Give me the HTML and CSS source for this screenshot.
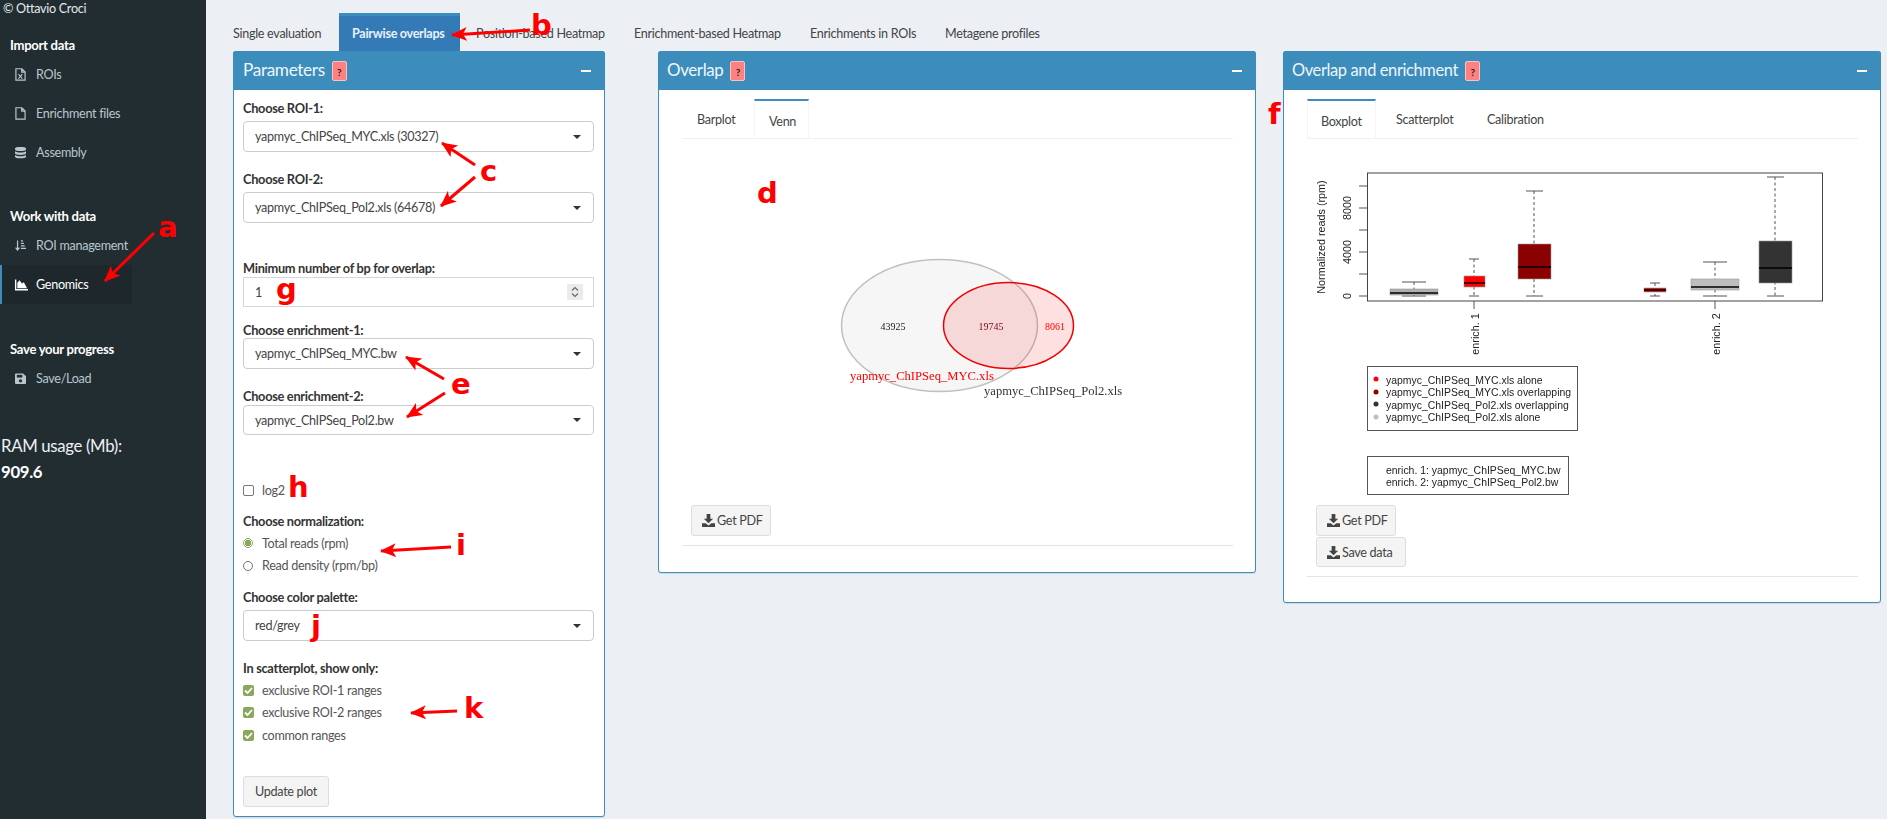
FILE: index.html
```html
<!DOCTYPE html>
<html lang="en">
<head>
<meta charset="utf-8">
<title>Pairwise overlaps</title>
<link rel="stylesheet" href="styles.css">
</head>
<body>
<aside class="sidebar">
  <div class="copyright">© Ottavio Croci</div>
  <div class="side-head first">Import data</div>
  <a class="side-item"><svg class="ico" viewBox="0 0 12 14"><path d="M1 .7h6.5L11 4.2v9H1zM7.3.9v3.5h3.5" fill="none" stroke="currentColor" stroke-width="1.3"/><path d="M3.8 6.5l4.2 5M8 6.5l-4.2 5" stroke="currentColor" stroke-width="1.2"/></svg><span>ROIs</span></a>
  <a class="side-item"><svg class="ico" viewBox="0 0 12 14"><path d="M1 .7h6.5L11 4.2v9H1zM7.3.9v3.5h3.5" fill="none" stroke="currentColor" stroke-width="1.3"/></svg><span>Enrichment files</span></a>
  <a class="side-item"><svg class="ico" viewBox="0 0 12 14"><path d="M0 2.5C0 .4 12 .4 12 2.5v1.2C12 6 0 6 0 3.700zM0 5.500c2 1.900 10 1.900 12 0v2.700c0 2-12 2-12 0zM0 9.800c2 1.900 10 1.900 12 0v1.700c0 2.200-12 2.200-12 0z" fill="currentColor"/></svg><span>Assembly</span></a>
  <div class="side-head">Work with data</div>
  <a class="side-item"><svg class="ico" viewBox="0 0 13 14"><path d="M3 1v11M.7 9.500L3 12.300l2.300-2.800" fill="none" stroke="currentColor" stroke-width="1.400"/><path d="M7 1.500h2.500M7 4.500h3.500M7 7.500h4.500M7 10.500h6" stroke="currentColor" stroke-width="1.500"/></svg><span>ROI management</span></a>
  <a class="side-item active"><svg class="ico" viewBox="0 0 14 14"><path d="M.7 1.500v11.200H14" fill="none" stroke="currentColor" stroke-width="1.500"/><path d="M2.500 11V5l2.500-2.500L7.500 6l2-1.500L13 11z" fill="currentColor"/></svg><span>Genomics</span></a>
  <div class="side-head save">Save your progress</div>
  <a class="side-item"><svg class="ico" viewBox="0 0 12 14"><path d="M1.300 1.500h7.500L12 4.500v7.500c0 .7-.5 1-1 1H1c-.6 0-1-.4-1-1V2.700c0-.7.500-1.200 1.300-1.200z" fill="currentColor"/><rect x="2" y="3" width="6" height="3" fill="#222d32"/><circle cx="6" cy="9.500" r="1.800" fill="#222d32"/></svg><span>Save/Load</span></a>
  <div class="ram">RAM usage (Mb):</div>
  <div class="ram strong">909.6</div>
</aside>

<main class="main">
  <nav class="top-tabs">
    <a class="top-tab t1">Single evaluation</a>
    <a class="top-tab t2 active">Pairwise overlaps</a>
    <a class="top-tab t3">Position-based Heatmap</a>
    <a class="top-tab t4">Enrichment-based Heatmap</a>
    <a class="top-tab t5">Enrichments in ROIs</a>
    <a class="top-tab t6">Metagene profiles</a>
  </nav>

  <div class="panels">
    <section class="panel params">
      <header class="panel-head"><h2>Parameters</h2><span class="help">?</span><i class="minus"></i></header>
      <div class="form">
        <label class="lab l1">Choose ROI-1:</label>
        <div class="select"><span>yapmyc_ChIPSeq_MYC.xls (30327)</span><b class="caret"></b></div>
        <label class="lab l2">Choose ROI-2:</label>
        <div class="select"><span>yapmyc_ChIPSeq_Pol2.xls (64678)</span><b class="caret"></b></div>
        <label class="lab l3">Minimum number of bp for overlap:</label>
        <div class="number"><span>1</span>
          <svg class="spin" viewBox="0 0 16 16"><rect width="16" height="16" fill="#ebebeb"/><path d="M5 6.500l3-3 3 3M5 9.500l3 3 3-3" fill="none" stroke="#666" stroke-width="1.100"/></svg>
        </div>
        <label class="lab l4">Choose enrichment-1:</label>
        <div class="select"><span>yapmyc_ChIPSeq_MYC.bw</span><b class="caret"></b></div>
        <label class="lab l5">Choose enrichment-2:</label>
        <div class="select short"><span>yapmyc_ChIPSeq_Pol2.bw</span><b class="caret"></b></div>
        <div class="opt log"><i class="box"></i><span>log2</span></div>
        <label class="lab l6">Choose normalization:</label>
        <div class="opt"><i class="radio on"></i><span>Total reads (rpm)</span></div>
        <div class="opt"><i class="radio"></i><span>Read density (rpm/bp)</span></div>
        <label class="lab l7">Choose color palette:</label>
        <div class="select"><span>red/grey</span><b class="caret"></b></div>
        <label class="lab l8">In scatterplot, show only:</label>
        <div class="opt"><i class="box on"><svg viewBox="0 0 11 11"><path d="M2 5.500l2.500 2.500L9 3" fill="none" stroke="#fff" stroke-width="1.800"/></svg></i><span>exclusive ROI-1 ranges</span></div>
        <div class="opt"><i class="box on"><svg viewBox="0 0 11 11"><path d="M2 5.500l2.500 2.500L9 3" fill="none" stroke="#fff" stroke-width="1.800"/></svg></i><span>exclusive ROI-2 ranges</span></div>
        <div class="opt"><i class="box on"><svg viewBox="0 0 11 11"><path d="M2 5.500l2.500 2.500L9 3" fill="none" stroke="#fff" stroke-width="1.800"/></svg></i><span>common ranges</span></div>
        <button class="btn update">Update plot</button>
      </div>
    </section>

    <section class="panel overlap">
      <header class="panel-head"><h2>Overlap</h2><span class="help">?</span><i class="minus"></i></header>
      <div class="tab-body">
        <nav class="sub-tabs">
          <a class="sub-tab s-bar">Barplot</a>
          <a class="sub-tab s-venn active">Venn</a>
        </nav>
        <svg class="plot" viewBox="682 139 551 366">
          <ellipse cx="939.500" cy="325.500" rx="98" ry="66" fill="#bebebe" fill-opacity=".14" stroke="#c0c0c0" stroke-width="1.500"/>
          <ellipse cx="1008.500" cy="325.500" rx="65" ry="43" fill="#ff0000" fill-opacity=".12" stroke="#f00000" stroke-width="1.500"/>
          <g class="venn-num">
            <text x="893" y="330" fill="#222">43925</text>
            <text x="991" y="330" fill="#7a0a14">19745</text>
            <text x="1055" y="330" fill="#f00">8061</text>
          </g>
          <text class="venn-lab" x="850" y="380" fill="#f00">yapmyc_ChIPSeq_MYC.xls</text>
          <text class="venn-lab" x="984" y="395" fill="#333">yapmyc_ChIPSeq_Pol2.xls</text>
        </svg>
        <div class="actions"><button class="btn b-pdf"><svg class="dl" viewBox="0 0 14 14"><path d="M5 0h4v5h3L7 10 2 5h3zM0 10h4l3 2.500L10 10h4v4H0z" fill="#444"/></svg>Get PDF</button></div>
        <hr class="rule">
      </div>
    </section>

    <section class="panel enrich">
      <header class="panel-head"><h2>Overlap and enrichment</h2><span class="help">?</span><i class="minus"></i></header>
      <div class="tab-body">
        <nav class="sub-tabs">
          <a class="sub-tab s-box active">Boxplot</a>
          <a class="sub-tab s-sc">Scatterplot</a>
          <a class="sub-tab s-cal">Calibration</a>
        </nav>
        <svg class="plot" viewBox="1307 139 551 366">
          <rect x="1367.500" y="173" width="455" height="128" fill="#fff" stroke="#444"/>
          <path d="M1367 296h-8M1367 274h-8M1367 252h-8M1367 230h-8M1367 208h-8M1367 186h-8M1474 301v8M1715 301v8" stroke="#555"/>
          <g class="axis">
            <text transform="translate(1351 296) rotate(-90)">0</text>
            <text transform="translate(1351 252) rotate(-90)">4000</text>
            <text transform="translate(1351 208) rotate(-90)">8000</text>
            <text transform="translate(1325 237) rotate(-90)">Normalized reads (rpm)</text>
            <text transform="translate(1479 334) rotate(-90)">enrich. 1</text>
            <text transform="translate(1720 334) rotate(-90)">enrich. 2</text>
          </g>
          <path class="whisk dash" d="M1414 282v14M1474 259v37M1534 191v105M1655 283v13M1715 262v34M1775 177v119"/>
          <path class="whisk" d="M1402 282h24M1402 296h24M1469 259h10M1469 296h10M1526 191h17M1526 296h17M1650 283h10M1650 296h10M1703 262h24M1703 296h24M1767 177h17M1767 296h17"/>
          <g class="boxes">
            <rect x="1390" y="289" width="48" height="6" fill="#b0b0b0"/>
            <rect x="1464" y="276" width="21" height="11" fill="#f00"/>
            <rect x="1518" y="244" width="33" height="35" fill="#8b0000"/>
            <rect x="1644" y="288" width="22" height="4" fill="#c00"/>
            <rect x="1691" y="279" width="48" height="11" fill="#bebebe"/>
            <rect x="1759" y="241" width="33" height="42" fill="#333"/>
          </g>
          <path class="med" d="M1390 293h48M1464 283h21M1518 267h33M1644 290h22M1691 287h48M1759 268h33"/>
          <rect x="1367.500" y="366.500" width="210" height="64" fill="#fff" stroke="#555"/>
          <circle cx="1376" cy="379" r="2.500" fill="#f00"/>
          <circle cx="1376" cy="392" r="2.500" fill="#8b0000"/>
          <circle cx="1376" cy="404" r="2.500" fill="#333"/>
          <circle cx="1376" cy="417" r="2.500" fill="#bebebe"/>
          <g class="leg">
            <text x="1386" y="384">yapmyc_ChIPSeq_MYC.xls alone</text>
            <text x="1386" y="396">yapmyc_ChIPSeq_MYC.xls overlapping</text>
            <text x="1386" y="409">yapmyc_ChIPSeq_Pol2.xls overlapping</text>
            <text x="1386" y="421">yapmyc_ChIPSeq_Pol2.xls alone</text>
          </g>
          <rect x="1367.500" y="456.500" width="201" height="38" fill="#fff" stroke="#555"/>
          <g class="leg">
            <text x="1386" y="474">enrich. 1: yapmyc_ChIPSeq_MYC.bw</text>
            <text x="1386" y="486">enrich. 2: yapmyc_ChIPSeq_Pol2.bw</text>
          </g>
        </svg>
        <div class="actions">
          <button class="btn b-pdf"><svg class="dl" viewBox="0 0 14 14"><path d="M5 0h4v5h3L7 10 2 5h3zM0 10h4l3 2.500L10 10h4v4H0z" fill="#444"/></svg>Get PDF</button>
          <button class="btn b-save"><svg class="dl" viewBox="0 0 14 14"><path d="M5 0h4v5h3L7 10 2 5h3zM0 10h4l3 2.500L10 10h4v4H0z" fill="#444"/></svg>Save data</button>
        </div>
        <hr class="rule">
      </div>
    </section>
  </div>
</main>

<svg class="notes" viewBox="0 0 1887 819">
  <defs>
    <marker id="head" markerUnits="userSpaceOnUse" markerWidth="18" markerHeight="14" refX="15" refY="7" orient="auto">
      <path d="M0 0L16 7 0 14 4 7z" fill="#f00"/>
    </marker>
  </defs>
  <g class="arrows">
    <path d="M154 233L105 281" marker-end="url(#head)"/>
    <path d="M530 30L452 35" marker-end="url(#head)"/>
    <path d="M475 165L442 143" marker-end="url(#head)"/>
    <path d="M475 177L441 206" marker-end="url(#head)"/>
    <path d="M444 379L406 357" marker-end="url(#head)"/>
    <path d="M445 393L407 417" marker-end="url(#head)"/>
    <path d="M451 547L381 551" marker-end="url(#head)"/>
    <path d="M457 711L411 713" marker-end="url(#head)"/>
  </g>
  <g class="letters">
    <text x="158" y="237">a</text>
    <text x="531" y="35">b</text>
    <text x="480" y="181">c</text>
    <text x="757" y="203">d</text>
    <text x="451" y="394">e</text>
    <text x="1268" y="124">f</text>
    <text x="276" y="299">g</text>
    <text x="288" y="497">h</text>
    <text x="456" y="555">i</text>
    <text x="311" y="636">j</text>
    <text x="464" y="718">k</text>
  </g>
</svg>
</body>
</html>
```
FILE: styles.css
```css
* { box-sizing: border-box; }
html, body { margin: 0; height: 819px; overflow: hidden; }
body {
  position: relative;
  display: flex;
  background: #ecf0f5;
  font-family: Lato, "Liberation Sans", sans-serif;
  font-size: 12.600px;
  letter-spacing: -.3px;
  color: #444;
}

/* sidebar */
.sidebar { width: 206px; flex: none; background: #222d32; color: #b8c7ce; }
.copyright { padding-left: 3px; line-height: 18px; color: #e4e9ec; }
.side-head { height: 19px; line-height: 19px; padding-left: 10px; margin-top: 35px; font-size: 13.100px; font-weight: 700; color: #fff; }
.side-head.first { margin-top: 18px; }
.side-head.save { margin-top: 36px; }
.side-item { display: flex; align-items: center; gap: 10px; width: 132px; height: 39px; padding-left: 15px; white-space: nowrap; }
.side-item.active { background: #1e282c; color: #fff; border-left: 2px solid #3c8dbc; padding-left: 13px; }
.ico { width: 11px; height: 13px; flex: none; overflow: visible; }
.side-item.active .ico { width: 13px; margin-right: -2px; }
.ram { font-size: 16.800px; letter-spacing: -.35px; line-height: 26px; color: #ecf0f5; padding-left: 1px; }
.side-item + .ram { margin-top: 35px; }
.ram.strong { font-weight: 700; color: #fff; }

/* main */
.main { flex: 1; min-width: 0; padding: 13px 0 0 14px; }
.top-tabs { display: flex; height: 38px; }
.top-tab { display: flex; align-items: center; padding-top: 3px; white-space: nowrap; padding-left: 13px; padding-right: 13px; }
.top-tab.active { background: #337ab7; color: #e8f1f8; font-weight: 700; border-top: 3px solid #3c8dbc; padding-top: 0; }
.t1 { width: 106px; }
.t2 { width: 121px; margin-left: 13px; }
.t3 { width: 155px; margin-left: 3px; }
.t4 { width: 173px; margin-left: 3px; }
.t5 { width: 132px; margin-left: 3px; }
.t6 { width: 120px; margin-left: 3px; }

.panels { display: flex; align-items: flex-start; margin-left: 13px; }
.panel { background: #fff; border: 1px solid #3c8dbc; border-radius: 3px; box-shadow: 0 1px 1px rgba(0,0,0,.1); }
.params { width: 372px; height: 766px; margin-right: 53px; }
.overlap { width: 598px; height: 522px; margin-right: 27px; }
.enrich { width: 598px; height: 552px; }

.panel-head { display: flex; align-items: center; height: 39px; margin: -1px -1px 0; padding: 0 10px; background: #3c8dbc; border-radius: 3px 3px 0 0; color: #f0f6fa; }
.overlap .panel-head, .enrich .panel-head { padding-left: 9px; }
.panel-head h2 { margin: -2px 0 0; font-size: 16.900px; letter-spacing: -.35px; font-weight: 400; }
.params .panel-head h2 { font-size: 17.200px; }
.enrich .panel-head h2 { font-size: 16.400px; }
.help { display: block; width: 15px; height: 20px; margin-left: 7px; background: #ff8080; border: 1px solid #f5c5c5; border-radius: 2px; text-align: center; font-size: 10px; font-weight: 700; line-height: 20px; color: #222; }
.minus { width: 10px; height: 2px; margin-left: auto; margin-right: 4px; background: #fff; }

/* form */
.form { display: flex; flex-direction: column; align-items: flex-start; padding: 10px 9px 0; }
.lab { display: block; font-size: 12.800px; font-weight: 700; line-height: 16px; color: #333; margin-bottom: 5px; white-space: nowrap; }
.l2, .l5, .l8 { margin-top: 19px; }
.l3 { margin-top: 37px; margin-bottom: 1px; }
.l4 { margin-top: 15px; margin-bottom: 0; }
.l5 { margin-bottom: 1px; }
.l6 { margin-top: 15px; margin-bottom: 3px; }
.l7 { margin-top: 12px; }
.l8 { margin-bottom: 3px; }
.select, .number { display: flex; align-items: center; width: 351px; height: 31px; padding: 0 12px 0 11px; background: #fff; }
.select { border: 1px solid #ccc; border-radius: 4px; white-space: nowrap; }
.select.short { height: 30px; }
.caret { width: 0; height: 0; margin-left: auto; border: 4px solid transparent; border-top-color: #333; border-bottom-width: 0; }
.number { height: 30px; border: 1px solid #d2d6de; }
.spin { width: 16px; height: 16px; margin-left: auto; margin-right: -2px; }
.opt { display: flex; align-items: center; gap: 8px; height: 22.500px; white-space: nowrap; color: #555; }
.log { height: 16px; margin-top: 47px; }
.box { display: block; width: 11px; height: 11px; border: 1px solid #767676; border-radius: 2px; background: #fff; }
.box.on { border: 0; background: #8aa85c; }
.box svg { display: block; }
.radio { display: block; width: 10px; height: 10px; margin-right: 1px; border: 1px solid #767676; border-radius: 50%; background: #fff; }
.radio.on { border-color: #8aa85c; background: radial-gradient(circle, #8aa85c 0 3px, #fff 3.500px); }

.btn { display: flex; align-items: center; height: 31px; padding: 0 0 0 10px; background: #f4f4f4; border: 1px solid #ddd; border-radius: 3px; font: inherit; letter-spacing: inherit; color: #444; white-space: nowrap; }
.update { margin-top: 29px; width: 86px; justify-content: center; padding: 0; }
.b-pdf { width: 80px; }
.b-save { width: 90px; margin-top: 1px; height: 30px; }
.dl { width: 13px; height: 13px; margin-right: 2px; }

/* sub tabs */
.tab-body { padding: 9px 22px 0 23px; }
.sub-tabs { display: flex; height: 40px; border-bottom: 1px solid #f0f0f0; }
.sub-tab { display: flex; align-items: center; padding: 2px 15px 0; white-space: nowrap; }
.sub-tab.active { height: 40px; border-top: 2px solid #3c8dbc; border-left: 1px solid #f4f4f4; border-right: 1px solid #f4f4f4; }
.s-bar { width: 72px; padding-left: 15px; }
.s-venn { width: 55px; padding-left: 14px; }
.s-box { width: 69px; padding-left: 13px; }
.s-sc { width: 89px; padding-left: 20px; }
.s-cal { width: 90px; padding-left: 22px; }
.plot { display: block; width: 551px; height: 366px; filter: blur(.35px); letter-spacing: normal; }
.actions { display: flex; flex-direction: column; align-items: flex-start; padding-left: 9px; }
.rule { margin: 9px 0 0; border: 0; border-top: 1px solid #e4e4e4; }

/* plot text */
.venn-num text { font: 10px "Liberation Serif", serif; text-anchor: middle; }
.venn-lab { font: 12.600px "Liberation Serif", serif; }
.axis text { font: 10.800px "Liberation Sans", sans-serif; fill: #222; text-anchor: middle; }
.leg text { font: 10.450px "Liberation Sans", sans-serif; fill: #222; }
.whisk { fill: none; stroke: #555; }
.whisk.dash { stroke-dasharray: 3 2.500; }
.boxes rect { stroke: #999; stroke-width: .6; }
.med { stroke: #000; stroke-width: 1.600; fill: none; }

/* annotations */
.notes { position: absolute; left: 0; top: 0; width: 1887px; height: 819px; pointer-events: none; letter-spacing: normal; }
.arrows path { fill: none; stroke: #f00; stroke-width: 3; }
.letters text { font: 700 29px "DejaVu Sans", sans-serif; fill: #f00; }
```
